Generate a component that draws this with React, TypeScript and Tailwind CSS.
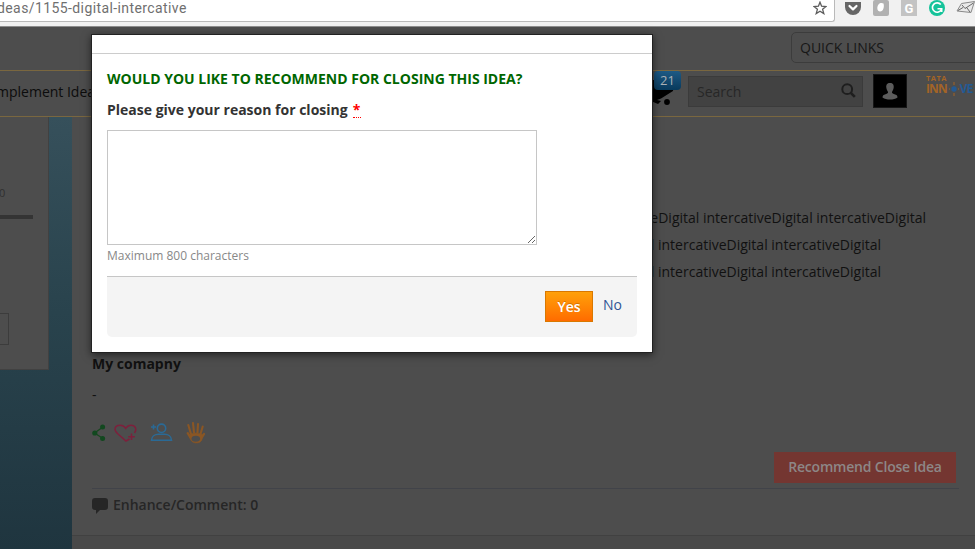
import React from "react";

const BrowserBar = () => (
  <div className="flex h-[27px] shrink-0 items-start border-b border-[#8d8d8d] bg-[#f1f1f1]">
    <div className="flex h-[22px] w-[835px] shrink-0 items-start justify-between rounded-br-[3px] border-b border-r border-[#b9b9b9] bg-white">
      <span className="-ml-[3px] whitespace-nowrap font-['Roboto',sans-serif] text-[14px] leading-[16px] tracking-[0.4px] text-[#6f6f6f]">
        deas/1155-digital-intercative
      </span>
      <svg className="mr-[7px] mt-[1px]" width="14" height="14" viewBox="0 0 14 14" fill="none" stroke="#5c5c5c" strokeWidth="1.3">
        <path d="M7 1.2 8.6 5.2 13 5.5 9.6 8.3 10.8 12.6 7 10.2 3.2 12.6 4.4 8.3 1 5.5 5.4 5.2Z" />
      </svg>
    </div>
    <svg className="ml-[9px]" width="131" height="18" viewBox="0 0 131 18">
      <path d="M1 2h16v5a8 8 0 0 1-16 0Z" fill="#666" />
      <path d="m5.500 6 3.500 3.400L12.500 6" fill="none" stroke="#fff" strokeWidth="2.2" strokeLinecap="round" strokeLinejoin="round" />
      <rect x="29" y="0" width="16" height="16" rx="2" fill="#b1b1b1" />
      <path d="M39.500 3.500c1 3.500-.2 8-3.500 8-3 0-3.500-4.500-1.500-7 1.500-1.800 3.500-1.800 5-1Z" fill="#fff" />
      <path d="M57 0h16v16H57Z" fill="#c3c3c3" />
      <text x="65" y="12.500" textAnchor="middle" fill="#fff" fontFamily="Roboto" fontWeight="700" fontSize="13">G</text>
      <circle cx="93" cy="8" r="8" fill="#15c39a" />
      <path d="M96.800 4.600A4.700 4.700 0 1 0 97.400 9.500M93.500 8.700h4.200v3.200" fill="none" stroke="#fff" strokeWidth="1.6" />
      <path d="m117.500 3.500 13-2-3.500 11-14-1.500Z" fill="#e9e9e9" stroke="#8a8a8a" />
      <path d="m118 5 3 3.500 8.500-5.500M114 10.500l5-3m4 .5 3 4" fill="none" stroke="#666" strokeWidth="1" />
    </svg>
  </div>
);

const Nav = () => (
  <div className="flex h-[47px] shrink-0 items-start border-y border-[#7a673f]">
    <span className="-ml-[4px] mt-[11px] w-[656px] shrink-0 whitespace-nowrap text-[14px] leading-[20px] text-[#0c0c0c]">
      mplement Idea
    </span>
    <div className="relative h-[36px] w-[36px] shrink-0">
      <svg className="absolute left-0 top-[7px]" width="24" height="28" viewBox="0 0 24 28">
        <path d="M-5 2H22L21 13 9 20.500 5 22l4 1-3 3-7-3L-3 8Z" fill="#000" />
        <path d="m9 22.500 10-5.500" stroke="#4d4d4d" strokeWidth="1.500" />
        <circle cx="15" cy="24" r="2.900" fill="#000" />
      </svg>
      <span className="absolute left-[2px] top-0 flex h-[19px] w-[27px] items-center justify-center rounded-[4px] bg-linear-to-b from-[#1e5a85] to-[#083a5c] text-[13px] text-[#abb1b5]">
        21
      </span>
    </div>
    <div className="mt-[5px] flex h-[31px] w-[175px] shrink-0 items-center justify-between border border-[#3b3b3b] bg-[#424242] pl-2 pr-[6px]">
      <span className="text-[14px] leading-[20px] text-[#272727]">Search</span>
      <svg className="-mt-[2px]" width="15" height="15" viewBox="0 0 15 15" fill="none" stroke="#1e1e1e" strokeWidth="2">
        <circle cx="6.200" cy="6.200" r="4.900" />
        <path d="m9.800 9.800 4 4" strokeWidth="2.600" />
      </svg>
    </div>
    <div className="ml-[10px] mt-[3px] flex h-[34px] w-[34px] shrink-0 items-center justify-center border border-[#161616] bg-black">
      <svg width="16" height="17" viewBox="0 0 16 17" fill="#5c5c5c">
        <path d="M8 0c3 0 4 2 3.700 4.500C11.500 6.800 10.300 8 10 9c-.2 1.200.6 1.600 2.500 2.200 2 .6 3 1.300 3 3.300C13.500 16 11 16.500 8 16.500S2.500 16 .5 14.500c0-2 1-2.700 3-3.300C5.400 10.600 6.200 10.200 6 9 5.700 8 4.500 6.800 4.300 4.500 4 2 5 0 8 0Z" />
      </svg>
    </div>
    <div className="ml-[19px] mt-[3px] flex shrink-0 flex-col whitespace-nowrap font-bold text-[#a36426]">
      <span className="h-[8px] text-[7.500px] leading-[8px] tracking-[0.5px]">TATA</span>
      <span className="flex h-[13px] items-center text-[12px] leading-[13px] tracking-[-0.9px]">
        INN
        <svg className="ml-[2px] mr-px" width="10" height="14" viewBox="0 0 10 14">
          <path d="M5 0v14M0 7h10" stroke="#a36426" strokeWidth="1" />
          <circle cx="5" cy="7" r="4" fill="#4d4d4d" />
          <circle cx="5" cy="7" r="2.700" fill="#235a94" />
        </svg>
        <span className="text-[#235a94]">VE</span>
      </span>
    </div>
  </div>
);

const Sidebar = () => (
  <div className="w-[72px] shrink-0 bg-linear-to-b from-[#36505b] via-[#29434d] via-45% to-[#1f353f]">
    <div className="flex h-[253px] w-[49px] flex-col items-start border-b border-r border-[#414141] bg-[#4d4d4d]">
      <span className="-ml-px mt-[68px] text-[11px] leading-[16px] text-[#303030]">0</span>
      <div className="mt-[14px] h-[4px] w-[33px] bg-[#343434]" />
      <div className="mt-[94px] h-[32px] w-[9px] border-y border-r border-[#3c3c3c]" />
    </div>
  </div>
);

const Actions = () => (
  <svg className="mt-[15px]" width="114" height="24" viewBox="0 0 114 24" fill="none">
    <path d="M11 7 2.500 13 11 18.500" stroke="#17481f" strokeWidth="1.300" />
    <g fill="#12481f">
      <circle cx="2.800" cy="13" r="2.600" />
      <circle cx="10.600" cy="7" r="2.500" />
      <circle cx="10.600" cy="18.500" r="2.500" />
    </g>
    <path d="M37.500 19 34 21 26 14C20.500 9 23.500 5.300 28 5.300c3 0 4.500 1.200 5.700 3 1.200-1.800 2.800-3 5.300-3 4.200 0 6.300 3.700 3.500 7.700M39.500 13.500v6.500M36.200 16.700h6.600" stroke="#7d203c" strokeWidth="1.500" />
    <g stroke="#2a6a96" strokeWidth="1.600">
      <circle cx="69.500" cy="8.300" r="4.200" />
      <path d="M59.500 20.300c0-4 3.500-6 7-6h6c3.500 0 7 2 7 6ZM61.500 4.500v5M59 7h5" />
    </g>
    <g stroke="#8a5624" strokeLinecap="round">
      <path d="m99 14-2.700-9M102 12.500 101 3M105.500 12.500 106 4M108.500 14l2.200-7.500" strokeWidth="2.100" />
      <path d="m98.500 17.500-2.800-4.300M109.500 18l2.500-4" strokeWidth="2.300" />
      <path d="M97.500 14.500c4-2 8.500-2 13 0l-.5 5c-1 4.500-9.500 5-11.500 0Z" fill="#8a5624" strokeWidth=".5" />
    </g>
    <ellipse cx="103.800" cy="18.800" rx="4.300" ry="3" fill="#4d4d4d" />
  </svg>
);

const Content = () => (
  <div className="flex min-w-0 flex-1 flex-col text-[14px] text-[#111]">
    <div className="mt-[87px] flex h-[81px] flex-col whitespace-nowrap leading-[27px]">
      <span className="flex w-[854px] justify-end">intercativeDigital intercativeDigital intercativeDigital</span>
      <span className="flex w-[809px] justify-end">intercativeDigital intercativeDigital intercativeDigital</span>
      <span className="flex w-[809px] justify-end">intercativeDigital intercativeDigital intercativeDigital</span>
    </div>
    <div className="ml-5 mt-[69px] flex flex-col items-start leading-[20px]">
      <strong className="font-bold">My comapny</strong>
      <span className="mt-[11px]">-</span>
      <Actions />
    </div>
    <div className="ml-5 mt-[8px] flex h-[37px] w-[867px] justify-end border-b border-[#414349] pr-[3px]">
      <button className="h-[31px] w-[182px] bg-[#743631] pb-[2px] text-[14px] font-semibold tracking-[-0.2px] text-[#8d8787]">
        Recommend Close Idea
      </button>
    </div>
    <div className="flex h-[47px] shrink-0 items-start border-b border-[#414141] pl-5 pt-[6px] text-[#262626]">
      <svg className="mt-[3px]" width="16" height="16" viewBox="0 0 16 16" fill="#262626">
        <path d="M3 0h10q3 0 3 3v6q0 3-3 3H8l-4 4v-4H3q-3 0-3-3V3q0-3 3-3Z" />
      </svg>
      <span className="ml-[5px] font-semibold leading-[20px]">Enhance/Comment: 0</span>
    </div>
    <div className="flex-1 bg-[#494949]" />
  </div>
);

const Dialog = () => (
  <div className="absolute left-[91px] top-[34px] flex h-[319px] w-[562px] flex-col border border-[#222] bg-white text-[14px] shadow-[0_2px_8px_rgba(0,0,0,0.55)]">
    <div className="h-[19px] shrink-0 border-b border-[#ccc]" />
    <div className="flex flex-col px-[15px]">
      <h2 className="mt-[15px] whitespace-nowrap text-[14px] font-bold leading-[20px] text-[#060]">
        WOULD YOU LIKE TO RECOMMEND FOR CLOSING THIS IDEA?
      </h2>
      <label className="mt-[11px] flex items-start font-bold leading-[20px] text-[#333]">
        Please give your reason for closing
        <span className="ml-[5px] h-[18px] w-[8px] border-b border-dotted border-[#ff0000] text-[#ff0000]">*</span>
      </label>
      <textarea className="mt-[10px] block h-[115px] w-[430px] resize border border-[#c6c6c6] bg-white outline-none" />
      <span className="mt-[2px] text-[12px] leading-[18px] text-[#888]">Maximum 800 characters</span>
      <div className="mt-[11px] flex h-[61px] items-start justify-end rounded-b-[5px] border-t border-[#c6c6c6] bg-[#f4f4f4] pr-[15px] pt-[14px]">
        <button className="h-[31px] w-[48px] border border-[#d97800] bg-linear-to-b from-[#ffa00a] to-[#ff6b00] text-[14px] font-semibold text-white [text-shadow:0_-1px_0_rgba(0,0,0,0.2)]">
          Yes
        </button>
        <a className="ml-[10px] mt-[4px] leading-[20px] text-[#2f5496]">No</a>
      </div>
    </div>
  </div>
);

export default function App() {
  return (
    <div className="relative flex h-[549px] w-[975px] flex-col overflow-hidden bg-[#4d4d4d] font-['Open_Sans',sans-serif]">
      <BrowserBar />
      <div className="flex h-[43px] shrink-0 items-start justify-end pt-[5px]">
        <div className="-mr-[6px] h-[31px] w-[190px] rounded-[5px] border border-[#3c3c3c] pl-2 text-[14px] leading-[29px] text-[#171717]">
          QUICK LINKS
        </div>
      </div>
      <Nav />
      <div className="flex min-h-0 flex-1">
        <Sidebar />
        <Content />
      </div>
      <Dialog />
    </div>
  );
}
